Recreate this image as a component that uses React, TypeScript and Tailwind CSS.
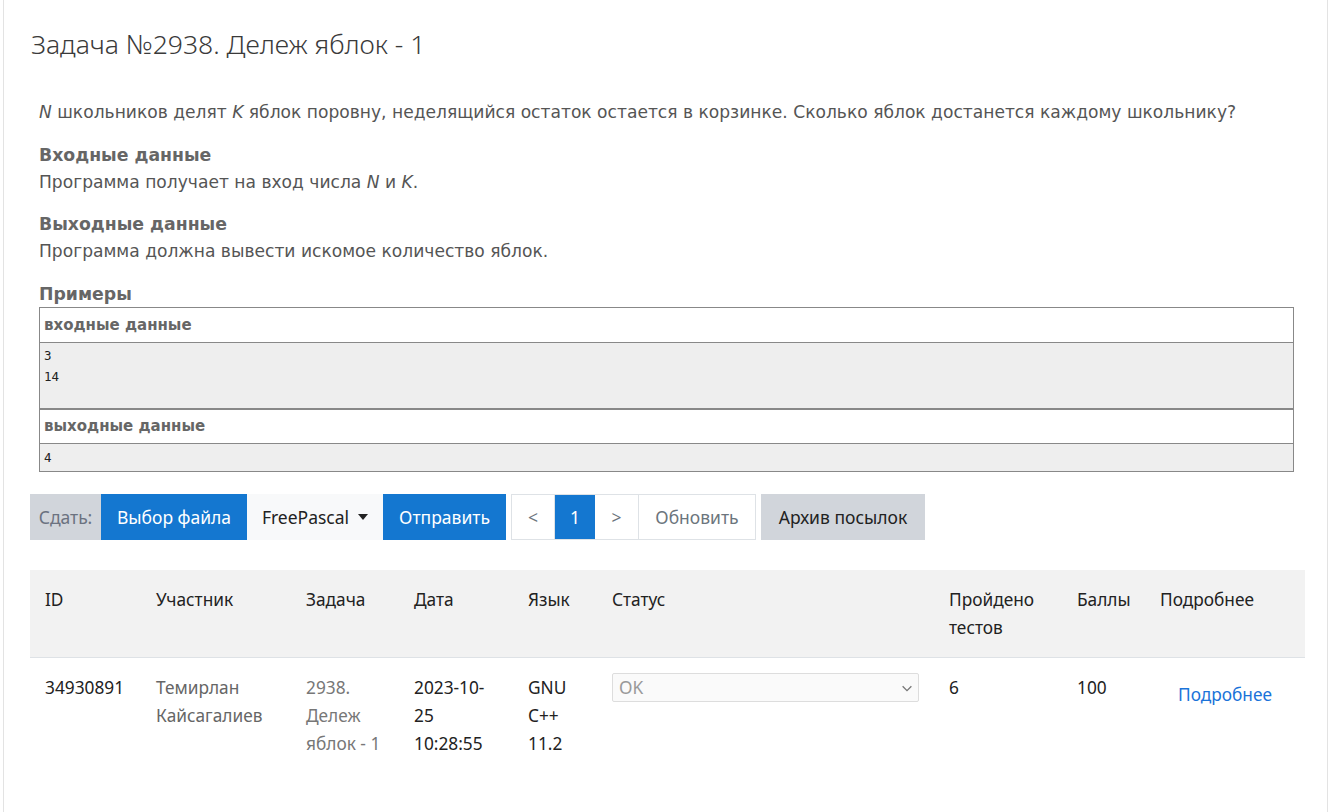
import React from "react";

const ui = { fontFamily: '"Noto Sans", "Open Sans", sans-serif' };
const verd = { fontFamily: '"DejaVu Sans", Verdana, sans-serif' };
const mono = { fontFamily: '"DejaVu Sans Mono", monospace' };

export default function App() {
  const cols = [111, 150, 108, 114, 84, 337, 128, 83, 160];
  const th = "px-[15px] pt-[16px] pb-[15px] font-normal";
  return (
    <div className="min-h-[812px] bg-white" style={ui}>
      <div className="mx-[3px] min-h-[812px] border-x border-[#e3e3e3] pl-[26px] pr-[24px] pt-[24px]">
        <h1 className="pl-[1px] text-[26.5px] font-light leading-[40px] text-[#3a3a3a]">
          Задача №2938. Дележ яблок - 1
        </h1>

        <div className="mx-[9px] mt-[37px] text-[17.1px] text-[#555]" style={verd}>
          <p className="leading-[22px] whitespace-nowrap">
            <i>N</i> школьников делят <i>K</i> яблок поровну, неделящийся остаток остается в корзинке. Сколько яблок достанется каждому школьнику?
          </p>
          <h3 className="mt-[21px] text-[17.3px] font-bold leading-[22px] text-[#666]">Входные данные</h3>
          <p className="mt-[5px] leading-[22px]">
            Программа получает на вход числа <i>N</i> и <i>K</i>.
          </p>
          <h3 className="mt-[20px] text-[17.3px] font-bold leading-[22px] text-[#666]">Выходные данные</h3>
          <p className="mt-[5px] leading-[22px]">Программа должна вывести искомое количество яблок.</p>
          <h3 className="mt-[21px] text-[17.3px] font-bold leading-[22px] text-[#666]">Примеры</h3>
          <div className="mt-[2px] border border-[#888]">
            <div className="h-[35px] border-b border-[#888] bg-white px-[4px] text-[15px] font-bold leading-[35px] text-[#666]">
              входные данные
            </div>
            <div className="h-[65px] bg-[#eeeeee] px-[4px] pt-[2px] text-[12.5px] leading-[21px] text-[#222]" style={mono}>
              <div>3</div>
              <div>14</div>
            </div>
            <div className="h-[36px] border-t-2 border-b border-[#888] bg-white px-[4px] text-[15px] font-bold leading-[33px] text-[#666]">
              выходные данные
            </div>
            <div className="h-[27px] bg-[#eeeeee] px-[4px] pt-[3px] text-[12.5px] leading-[21px] text-[#222]" style={mono}>
              4
            </div>
          </div>
        </div>

        <div className="mt-[22px] flex h-[46px] items-stretch text-[17.5px]">
          <div className="flex w-[71px] items-center justify-center bg-[#d1d5db] text-[#6b7280]">Сдать:</div>
          <div className="flex w-[146px] items-center justify-center bg-[#1477d0] text-white">Выбор файла</div>
          <div className="flex w-[136px] items-center justify-center gap-[9px] bg-[#f8f9fa] text-[#222]">
            FreePascal
            <svg width="10" height="6" viewBox="0 0 10 6"><path d="M0 0h10L5 6z" fill="#222" /></svg>
          </div>
          <div className="flex w-[123px] items-center justify-center bg-[#1477d0] text-white">Отправить</div>
          <div className="ml-[5px] flex border border-[#dee2e6]">
            <div className="flex w-[43px] items-center justify-center border-r border-[#dee2e6] text-[#6c757d]">&lt;</div>
            <div className="flex w-[40px] items-center justify-center bg-[#1477d0] text-white">1</div>
            <div className="flex w-[44px] items-center justify-center border-r border-[#dee2e6] text-[#6c757d]">&gt;</div>
            <div className="flex w-[116px] items-center justify-center text-[#6c757d]">Обновить</div>
          </div>
          <div className="ml-[5px] flex w-[164px] items-center justify-center bg-[#d1d5db] text-[#222]">Архив посылок</div>
        </div>

        <table className="mt-[30px] w-[1275px] table-fixed border-collapse text-[17.3px] leading-[28px] text-[#222]">
          <colgroup>
            {cols.map((w, i) => (
              <col key={i} style={{ width: w }} />
            ))}
          </colgroup>
          <thead>
            <tr className="border-b border-[#dee2e6] bg-[#f2f2f2] text-left align-top">
              <th className={th}>ID</th>
              <th className={th}>Участник</th>
              <th className={th}>Задача</th>
              <th className={th}>Дата</th>
              <th className={th}>Язык</th>
              <th className={th}>Статус</th>
              <th className={th}>Пройдено тестов</th>
              <th className={th}>Баллы</th>
              <th className={th}>Подробнее</th>
            </tr>
          </thead>
          <tbody>
            <tr className="align-top">
              <td className="px-[15px] pt-[16px]">34930891</td>
              <td className="px-[15px] pt-[16px] text-[#666]">Темирлан Кайсагалиев</td>
              <td className="px-[15px] pt-[16px] text-[#777]">2938. Дележ яблок - 1</td>
              <td className="px-[15px] pt-[16px]">2023-10-25 10:28:55</td>
              <td className="px-[15px] pt-[16px]">GNU C++ 11.2</td>
              <td className="px-[15px] pt-[15px]">
                <div className="flex h-[29px] w-[307px] items-center justify-between rounded-[2px] border border-[#ddd] bg-[#fafafa] pl-[6px] pr-[4px] text-[#999]">
                  <span>OK</span>
                  <svg width="14" height="14" viewBox="0 0 16 16"><path d="M3 6l5 5 5-5" fill="none" stroke="#777" strokeWidth="1.5" /></svg>
                </div>
              </td>
              <td className="px-[15px] pt-[16px]">6</td>
              <td className="px-[15px] pt-[16px]">100</td>
              <td className="px-[15px] pt-[23px] text-center text-[#1a73d9]">Подробнее</td>
            </tr>
          </tbody>
        </table>
      </div>
    </div>
  );
}
